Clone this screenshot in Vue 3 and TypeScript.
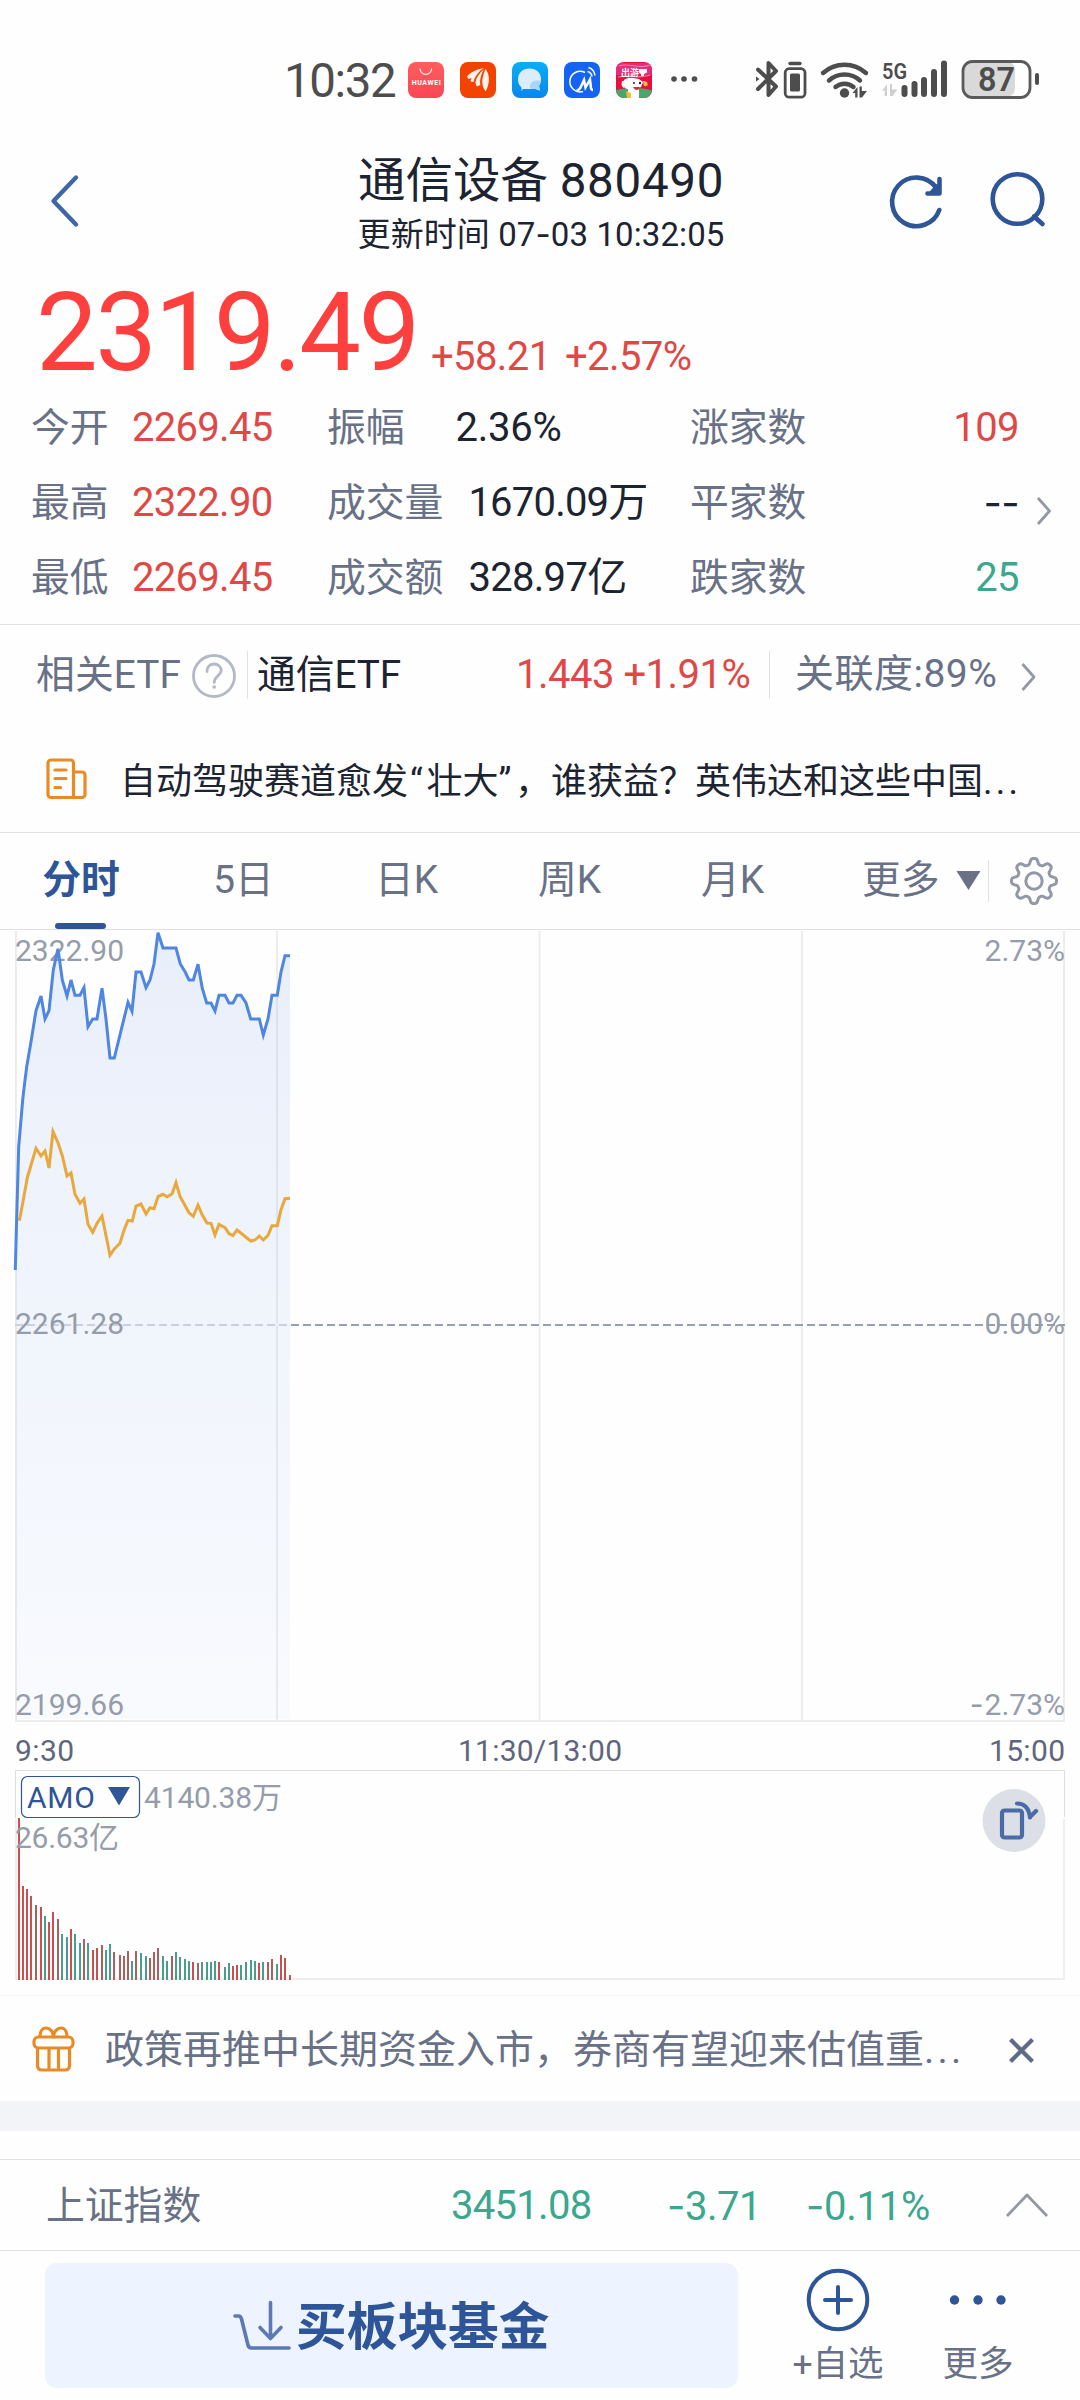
<script setup lang="ts">
interface Stat {
  label: string
  value: string
  tone: string
}
interface StatRow {
  range: Stat
  volume: Stat
  breadth: Stat
}

const rows: StatRow[] = [
  {
    range: { label: '今开', value: '2269.45', tone: 'up' },
    volume: { label: '振幅', value: '2.36%', tone: 'swing' },
    breadth: { label: '涨家数', value: '109', tone: 'up' },
  },
  {
    range: { label: '最高', value: '2322.90', tone: 'up' },
    volume: { label: '成交量', value: '1670.09万', tone: '' },
    breadth: { label: '平家数', value: '--', tone: 'none' },
  },
  {
    range: { label: '最低', value: '2269.45', tone: 'up' },
    volume: { label: '成交额', value: '328.97亿', tone: 'amount' },
    breadth: { label: '跌家数', value: '25', tone: 'down' },
  },
]

type Point = [number, number]

// Series are stored in thirds of a pixel, relative to the plot's origin.
const price: Point[] = [
  [46, 1050], [50, 890], [56, 680], [62, 610], [68, 540], [72, 505], [80, 440], [93, 365], [108, 272], [123, 228], [135, 297], [147, 272],
  [160, 150], [174, 86], [187, 180], [201, 228], [213, 180], [225, 226], [240, 226], [252, 203], [264, 320],
  [278, 297], [291, 297], [306, 205], [318, 297], [330, 414], [343, 414], [384, 247], [396, 274], [408, 156],
  [423, 156], [438, 203], [450, 180], [462, 132], [474, 38], [489, 84], [528, 84], [541, 132], [555, 155], [567, 180],
  [580, 180], [594, 133], [607, 205], [620, 249], [633, 249], [645, 273], [657, 226], [675, 226], [687, 249],
  [699, 249], [711, 226], [723, 226], [738, 249], [752, 297], [778, 297], [790, 345], [804, 297], [816, 226],
  [832, 226], [843, 156], [855, 107], [870, 107],
]
const average: Point[] = [
  [58, 362], [68, 310], [82, 233], [108, 145], [123, 168], [135, 153], [147, 204], [159, 95], [174, 128],
  [187, 167], [201, 228], [213, 219], [225, 283], [240, 310], [252, 297], [264, 373], [278, 397], [291, 370],
  [306, 348], [330, 466], [343, 447], [360, 430], [372, 391], [384, 361], [397, 363], [408, 318], [423, 312],
  [438, 342], [450, 323], [462, 326], [474, 290], [489, 283], [501, 290], [516, 282], [528, 248], [540, 289],
  [567, 338], [580, 349], [594, 315], [607, 345], [621, 369], [633, 370], [645, 405], [657, 373], [675, 383],
  [687, 401], [699, 407], [711, 390], [752, 423], [765, 420], [778, 408], [790, 420], [804, 406], [816, 377],
  [832, 377], [843, 329], [855, 296], [870, 295],
]
const toPoints = (list: Point[], top: number): string =>
  list.map(([x, y]) => `${(x / 3).toFixed(1)},${(top + y / 3).toFixed(1)}`).join(' ')

const priceLine = toPoints(price, -10)
const averageLine = toPoints(average, 170)
const area = `15,789 ${priceLine} 290,789`

// [centre, top, colour]: r = rise, m = muted rise, g = fall
const volume: [number, number, string][] = [
  [57, -6, 'r'], [69, 198, 'r'], [81, 207, 'r'], [93, 228, 'r'], [108, 255, 'm'], [123, 261, 'r'], [135, 288, 'g'],
  [147, 306, 'r'], [159, 276, 'r'], [174, 297, 'm'], [186, 342, 'g'], [201, 351, 'g'], [213, 327, 'r'],
  [225, 342, 'g'], [240, 369, 'g'], [252, 357, 'm'], [264, 369, 'g'], [279, 390, 'r'], [291, 384, 'r'],
  [306, 375, 'm'], [318, 390, 'g'], [330, 372, 'g'], [342, 396, 'm'], [360, 405, 'm'], [372, 408, 'm'],
  [384, 393, 'm'], [396, 423, 'g'], [408, 393, 'm'], [423, 399, 'g'], [438, 408, 'g'], [450, 414, 'm'],
  [462, 396, 'm'], [474, 384, 'm'], [489, 408, 'g'], [501, 423, 'g'], [516, 408, 'm'], [528, 396, 'g'],
  [540, 411, 'g'], [555, 417, 'g'], [567, 423, 'g'], [579, 426, 'r'], [594, 429, 'm'], [606, 426, 'g'],
  [621, 426, 'g'], [633, 426, 'g'], [645, 423, 'g'], [657, 426, 'r'], [675, 441, 'g'], [687, 429, 'g'],
  [699, 438, 'r'], [711, 435, 'r'], [723, 435, 'g'], [738, 426, 'g'], [753, 420, 'g'], [765, 423, 'g'],
  [777, 429, 'r'], [789, 426, 'g'], [804, 426, 'm'], [816, 417, 'm'], [831, 432, 'g'], [843, 405, 'r'],
  [855, 414, 'r'], [870, 465, 'm'],
]
const fills: Record<string, string> = { r: '#cb4f4f', m: '#a9605f', g: '#479e8c' }

const gearPath = (() => {
  const pts: string[] = []
  for (let i = 0; i < 96; i++) {
    const a = (i / 96) * Math.PI * 2
    const r = 19.7 + 3 * Math.tanh(Math.cos(a * 8) * 1.8)
    pts.push(`${(24 + r * Math.sin(a)).toFixed(2)} ${(24 - r * Math.cos(a)).toFixed(2)}`)
  }
  return `M${pts.join('L')}Z`
})()
</script>

<template>
  <div class="screen">
    <div class="status">
      <span class="clock">10:32</span>
      <div class="apps">
        <svg width="36" height="36" viewBox="0 0 36 36">
          <defs>
            <linearGradient id="hw" x1="0" y1="0" x2="0" y2="1"><stop offset="0" stop-color="#ff5e5c" /><stop offset="1" stop-color="#fb4655" /></linearGradient>
          </defs>
          <rect width="36" height="36" rx="8" fill="url(#hw)" />
          <path d="M12 6.500a5.800 5.800 0 0 0 11.600 0" fill="none" stroke="#fff" stroke-width="1.100" />
          <text x="3.700" y="23" font-size="7" font-weight="700" fill="#fff" textLength="29">HUAWEI</text>
        </svg>
        <svg width="36" height="36" viewBox="0 0 36 36">
          <rect width="36" height="36" rx="8" fill="#f24301" />
          <path d="M24 6c-7 1-14 4.500-17 8.500l1.500 2.500 3-1-1 3.500 3 .5C15 14 19 9 24 6z" fill="#fff0e8" />
          <path d="M24.300 7c-5 4-8 8.500-9 13.500l1.500 4 3.500-1.500C19.500 17 21.500 11 24.300 7z" fill="#fff0e8" />
          <path d="M25.500 7c-3 7-4 12-2.500 18l2.500 4.500C29.500 23 30.500 13 25.500 7z" fill="#fff0e8" />
        </svg>
        <svg width="36" height="36" viewBox="0 0 36 36">
          <defs>
            <linearGradient id="msg" x1="0" y1="0" x2="0" y2="1"><stop offset="0" stop-color="#0aaef6" /><stop offset="1" stop-color="#0786ef" /></linearGradient>
          </defs>
          <rect width="36" height="36" rx="8" fill="url(#msg)" />
          <path d="M17.500 6.500c7 0 11.500 4.500 11.500 10.500 0 3-1 5.500-2 7l1 4.500-4.500-1.500H11l-1.500 2v-3.500C7 23.500 6 20.500 6 17.500 6 11 10.500 6.500 17.500 6.500z" fill="#dcedfa" />
          <path d="M28.500 19c-4.500-1.500-10.500.5-10.500 5.500 0 1.500.5 2 1.500 2.500h4l4.500 1.500-1-4.500c1-1.500 1.500-3 1.500-5z" fill="#a9d5f7" />
        </svg>
        <svg width="36" height="36" viewBox="0 0 36 36">
          <rect width="36" height="36" rx="8" fill="#1463f3" />
          <g fill="none" stroke="#fff">
            <path d="M21 10.500A10.300 10.300 0 1 0 19 29.500" stroke-width="1.500" />
            <path d="M12.500 28.500c2.500 0 3.500-1.500 5-5l2.500-5.500 1.500 7.500 4.500-8 1 8.500c.3 1.500 1 2 2 2" stroke-width="2.500" />
            <path d="M23.500 9.500a6 6 0 0 1 4.500 5M24.500 5.500a9.500 9.500 0 0 1 6.500 8" stroke-width="1.500" />
          </g>
        </svg>
        <svg width="36" height="36" viewBox="0 0 36 36">
          <defs><clipPath id="trip"><rect width="36" height="36" rx="8" /></clipPath></defs>
          <g clip-path="url(#trip)">
            <rect width="36" height="36" fill="#e3123d" />
            <path d="M-2 1h40v12H-2z" fill="#e52c78" />
            <path d="M3 4c8-4 21 4 31-1M2 15c9-2 23 2 32-2" fill="none" stroke="#ff7ab0" stroke-width="1.200" />
            <path d="M-2 29c10-4 28-4 40 0v9H-2z" fill="#4aa66c" />
            <text x="5" y="14" font-size="9" font-weight="700" fill="#fff">出游</text>
            <path d="M23 7h8v3.500l-3 1.500v2h-3v-2l-2-1.500z" fill="#fff" />
            <path d="M8 18c3-3 10-2 15-1l4 3-2 5-2 1v10H12v-9c-4 0-6-4-4-9z" fill="#fff" />
            <path d="M6 19c-1 4 0 6 2 7l1-7zM27 19l4 1-2 4z" fill="#f3f3f3" />
            <path d="M17 25h7c-1 4-5 4-7 0z" fill="#dc2b35" />
            <circle cx="18" cy="21" r="1" fill="#222" /><circle cx="24" cy="21" r="1.200" fill="#222" />
            <path d="M10 29l5 2v5h-4z" fill="#f1bb3d" /><circle cx="29.500" cy="22" r="2.200" fill="#f5b93e" />
          </g>
        </svg>
      </div>
      <svg class="more-dots" width="28" height="8" viewBox="0 0 28 8" fill="#4d4d4d">
        <circle cx="4" cy="4" r="2.800" /><circle cx="14" cy="4" r="2.800" /><circle cx="24.500" cy="4" r="2.800" />
      </svg>
      <svg class="signals" width="290" height="44" viewBox="0 0 290 44" fill="none" stroke="#4d4d4d">
        <g stroke-width="4" stroke-linecap="round" stroke-linejoin="round">
          <path d="M4 11.500l18 17-7.500 8.500V5l7.500 8L4 31" />
        </g>
        <path d="M2 18.500l3.500 2.500L2 23.500z" fill="#4d4d4d" stroke="none" />
        <path d="M36 5.500h10" stroke-width="3.400" stroke-linecap="round" />
        <rect x="31.200" y="10.700" width="19.800" height="28.500" rx="4" stroke-width="2.800" />
        <rect x="36" y="15.500" width="10" height="18" rx="1.500" fill="#4d4d4d" stroke="none" />
        <g stroke-width="4.400" stroke-linecap="round">
          <path d="M69 15a32 32 0 0 1 43 0M75 22.500a23 23 0 0 1 31 0M81.500 29a14 14 0 0 1 18 0" />
        </g>
        <circle cx="90.500" cy="35" r="4.700" fill="#4d4d4d" stroke="none" />
        <path d="M98.500 35l5-6v10.500h-2.300V35zM105.500 28.500h2.300V33h5.200l-5 6.500h-2.500z" fill="#4d4d4d" stroke="none" />
        <path d="M128 32.500l5-6v11.500h-2.300v-5.500zM136 26h2v5.500h5.500l-5 6.500H136z" fill="#cfcfcf" stroke="none" />
        <text x="128" y="21" font-size="21.500" font-weight="600" fill="#4d4d4d" stroke="none" textLength="25" lengthAdjust="spacingAndGlyphs">5G</text>
        <g stroke-width="6" stroke-linecap="round">
          <path d="M150.500 30v6M160.500 26v10M170 22v14M180 14v22M190 5.500V36" />
        </g>
        <rect x="209" y="3.500" width="52" height="35" rx="8" fill="#d9d9d9" stroke="none" />
        <rect x="209" y="3.500" width="67" height="36" rx="9.500" stroke-width="2.800" stroke="#5a5a5a" />
        <rect x="281" y="15" width="4" height="12" rx="2" fill="#4d4d4d" stroke="none" />
        <text x="224" y="32.500" font-size="34" font-weight="600" fill="#4d4d4d" stroke="none" textLength="37" lengthAdjust="spacingAndGlyphs">87</text>
      </svg>
    </div>

    <header class="header">
      <svg class="back" width="32" height="54" viewBox="0 0 32 54"><path d="M26 3.500L3.500 27 26 50.500" /></svg>
      <div class="titles">
        <h1>通信设备 <span>880490</span></h1>
        <p>更新时间 07<i>-</i>03 10:32:05</p>
      </div>
      <svg class="tool" width="60" height="60" viewBox="0 0 60 60">
        <path d="M50 15.500A24.300 24.300 0 1 0 53.300 38" /><path d="M53.500 7v14.500H41.500" /><path d="M51 13l1 7-7-.5z" class="solid" />
      </svg>
      <svg class="tool search" width="60" height="60" viewBox="0 0 60 60">
        <circle cx="29.500" cy="29" r="24.800" /><path d="M46 46.500l8.500 7.500" />
      </svg>
    </header>

    <section class="quote">
      <strong>2319.49</strong><span class="diff">+58.21</span><span class="rate">+2.57%</span>
    </section>

    <section class="stats">
      <div class="table">
        <div v-for="row in rows" :key="row.range.label" class="row">
          <span class="label">{{ row.range.label }}</span>
          <span class="value first" :class="row.range.tone">{{ row.range.value }}</span>
          <span class="mid">
            <span class="label">{{ row.volume.label }}</span>
            <span class="value" :class="row.volume.tone">{{ row.volume.value }}</span>
          </span>
          <span class="label">{{ row.breadth.label }}</span>
          <span class="value last" :class="row.breadth.tone">{{ row.breadth.value }}</span>
        </div>
      </div>
      <svg class="arrow" width="18" height="30" viewBox="0 0 18 30"><path d="M3 2l11.500 13L3 28" /></svg>
    </section>

    <section class="etf">
      <span class="label">相关ETF</span>
      <svg class="help" width="46" height="46" viewBox="0 0 46 46">
        <circle cx="23" cy="23" r="20.500" /><path d="M16 18.500c0-4.500 3-7.500 7.200-7.500s7 3 7 6.500c0 5-7 5.500-7 12" /><circle class="pt" cx="23.200" cy="34" r="1.800" />
      </svg>
      <i class="bar"></i>
      <span class="name">通信ETF</span>
      <span class="etf-price">1.443 +1.91%</span>
      <i class="bar second"></i>
      <span class="label relation">关联度:89%</span>
      <svg class="arrow" width="18" height="30" viewBox="0 0 18 30"><path d="M3.500 2L15 15 3.500 28" /></svg>
    </section>

    <section class="news">
      <svg width="42" height="44" viewBox="0 0 42 44" fill="none" stroke="#e88a26" stroke-width="3.200" stroke-linejoin="round" stroke-linecap="round">
        <path d="M28.500 40.500H6a3 3 0 0 1-3-3V6a3 3 0 0 1 3-3h19.500a3 3 0 0 1 3 3zM28.500 15h8.500a3 3 0 0 1 3 3v19.500a3 3 0 0 1-3 3h-8.500" />
        <path d="M10 13h11M10 21.500h11M10 30.500h5.500" />
      </svg>
      <span>自动驾驶赛道愈发<b class="open">“</b>壮大<b>”</b>，谁获益？英伟达和这些中国<b class="dots3">...</b></span>
    </section>

    <nav class="tabs">
      <span class="tab active">分时</span>
      <span class="tab">5日</span>
      <span class="tab">日K</span>
      <span class="tab">周K</span>
      <span class="tab">月K</span>
      <span class="tab more">更多<svg width="26" height="20" viewBox="0 0 26 20"><path d="M0.500 0h24L12.500 19z" fill="#687186" /></svg></span>
      <i class="bar"></i>
      <svg class="gear" width="48" height="48" viewBox="0 0 48 48"><path :d="gearPath" /><circle cx="24" cy="24" r="8.200" /></svg>
    </nav>

    <svg class="chart" width="1080" height="1065" viewBox="0 0 1080 1065">
      <defs>
        <linearGradient id="shade" x1="0" y1="0" x2="0" y2="1">
          <stop offset="0" stop-color="#4f82df" stop-opacity=".12" /><stop offset="1" stop-color="#5a8cf0" stop-opacity=".035" />
        </linearGradient>
      </defs>
      <path d="M16 1v790M277 1v790M539.500 1v790M802 1v790M1064 1v790M15 791h1050" stroke="#ededed" stroke-width="2" />
      <path d="M15 395h1050" stroke="#94a0b0" stroke-width="1.800" stroke-dasharray="8 4" />
      <polygon :points="area" fill="url(#shade)" />
      <path d="M15 395h275" stroke="#eff3fc" stroke-width="3" stroke-opacity=".6" />
      <g class="axis">
        <text x="15" y="31" textLength="109">2322.90</text>
        <text x="15" y="404" textLength="109">2261.28</text>
        <text x="15" y="785" textLength="109">2199.66</text>
        <text x="1065" y="31" text-anchor="end">2.73%</text>
        <text x="1065" y="404" text-anchor="end">0.00%</text>
        <text x="1065" y="785" text-anchor="end"><tspan class="dash">-</tspan><tspan dx="1">2.73%</tspan></text>
      </g>
      <polyline :points="averageLine" fill="none" stroke="#e8a83c" stroke-width="3" />
      <polyline :points="priceLine" fill="none" stroke="#4f86e0" stroke-width="3" />
      <g class="axis time">
        <text x="15" y="831" textLength="59">9:30</text>
        <text x="540" y="831" text-anchor="middle" textLength="164">11:30/13:00</text>
        <text x="1065" y="831" text-anchor="end" textLength="76">15:00</text>
      </g>
      <path d="M15.500 888V840.500h1049V887" fill="none" stroke="#dedede" />
      <path d="M16 889v160M15 1049h1049v-160" fill="none" stroke="#eeeeef" stroke-width="2" />
      <rect v-for="bar in volume" :key="bar[0]" :x="bar[0] / 3 - 1" :y="890 + bar[1] / 3" width="2" :height="(480 - bar[1]) / 3" :fill="fills[bar[2]]" />
      <rect x="21.500" y="846.500" width="118" height="41" rx="6" fill="#fefefe" stroke="#2f5599" stroke-width="1.200" />
      <text x="27" y="878" font-size="30" fill="#2f5599" textLength="68">AMO</text>
      <path d="M108 857h22l-11 18.500z" fill="#2f5599" />
      <g class="axis">
        <text x="144" y="878" textLength="138">4140.38万</text>
        <text x="15" y="918" textLength="104">26.63亿</text>
      </g>
      <circle cx="1014" cy="890.500" r="31.500" fill="#dddfe7" />
      <g fill="none" stroke="#4a6ba5" stroke-width="4.200" stroke-linecap="round" stroke-linejoin="round">
        <rect x="1002" y="880.500" width="20" height="27" rx="2.500" />
        <path d="M1017 873.500c8 0 12 5 13 14M1030 887l6-6" />
      </g>
    </svg>

    <section class="promo">
      <svg width="44" height="46" viewBox="0 0 44 46" fill="none" stroke="#e88a26" stroke-width="3.200" stroke-linejoin="round">
        <rect x="2" y="11" width="39" height="11" rx="4.500" />
        <path d="M5.500 22v18a4 4 0 0 0 4 4h24a4 4 0 0 0 4-4V22M17 22.500V44M26.500 22.500V44M8 11C8 6 10 2 14 2s7.500 4 7.500 9c0-5 3.500-9 7.500-9s6 4 6 9" />
      </svg>
      <span>政策再推中长期资金入市，券商有望迎来估值重<b class="dots3">...</b></span>
      <svg class="close" width="28" height="28" viewBox="0 0 28 28"><path d="M2.500 2.500l22 22M24.500 2.500l-22 22" /></svg>
    </section>
    <div class="band"></div>

    <section class="index">
      <span class="label">上证指数</span>
      <span class="down i1">3451.08</span>
      <span class="down i2"><i>-</i>3.71</span>
      <span class="down i3"><i>-</i>0.11%</span>
      <svg class="arrow" width="44" height="26" viewBox="0 0 44 26"><path d="M2 24L22 3l20 21" /></svg>
    </section>

    <footer class="footer">
      <button>
        <svg width="58" height="52" viewBox="0 0 58 52" fill="none" stroke="#5c79b3" stroke-width="3.600" stroke-linecap="round" stroke-linejoin="round">
          <path d="M2 16h3.500c1.500 0 2.500 1 3 3L15 45c.5 2 1.500 3 3.500 3H56" /><path d="M37.500 2.500v35M27 27.500l10.500 11 10.500-11" />
        </svg>
        <span>买板块基金</span>
      </button>
      <div class="action add">
        <svg width="66" height="66" viewBox="0 0 66 66"><circle cx="33" cy="33" r="29.300" /><path d="M33 20v26M20 33h26" /></svg>
        <span>+自选</span>
      </div>
      <div class="action">
        <svg width="66" height="66" viewBox="0 0 66 66"><g class="dots"><circle cx="9.500" cy="33" r="4.700" /><circle cx="33" cy="33" r="4.700" /><circle cx="56" cy="33" r="4.700" /></g></svg>
        <span>更多</span>
      </div>
    </footer>
  </div>
</template>

<style>
body { background: #fefefe; }
</style>

<style scoped>
.screen {
  width: 1080px;
  height: 2400px;
  overflow: hidden;
  display: flex;
  flex-direction: column;
  background: #fefefe;
  color: #1d2431;
  font: 39px/1.2 Roboto, "Noto Sans CJK SC", sans-serif;
  white-space: nowrap;
}
.screen > * { box-sizing: border-box; flex-shrink: 0; }
svg { display: block; flex-shrink: 0; }
b { font-weight: 400; }
.status { height: 130px; padding: 56px 0 0 284px; display: flex; align-items: flex-start; }
.clock { width: 124px; font-size: 47.500px; line-height: 51px; letter-spacing: -1.400px; color: #4d4d4d; }
.apps { display: flex; gap: 16px; padding-top: 6px; }
.more-dots { margin: 19px 0 0 18px; }
.signals { margin: 2px 0 0 56px; }

.header { height: 140px; display: flex; }
.back { margin: 44px 0 0 50px; fill: none; stroke: #3f66a6; stroke-width: 4.400; stroke-linejoin: round; stroke-linecap: round; }
.titles { width: 460px; margin-left: 229px; text-align: center; }
h1 { margin: 21px 0 0; font-size: 47.500px; font-weight: 400; line-height: 60px; }
h1 span { letter-spacing: .7px; }
.titles p { margin: 0; font-size: 33px; line-height: 47px; letter-spacing: .1px; }
i, .dash, .none { font-style: normal; font-family: Inter, sans-serif; }
.tool { margin: 42px 0 0 115px; fill: none; stroke: #2f5599; stroke-width: 4.600; stroke-linecap: round; stroke-linejoin: round; }
.tool .solid { fill: #2f5599; stroke-width: 2; }
.search { margin: 40px 0 0 42px; }

.quote { height: 120px; padding: 3px 0 0 36px; display: flex; align-items: baseline; line-height: 119px; color: #e04845; }
.quote strong { width: 395px; font-weight: 400; font-size: 110px; letter-spacing: -2.600px; color: #fd3f3d; }
.quote span { font-size: 40px; letter-spacing: -.6px; }
.diff { width: 134px; }

.stats { height: 235px; display: flex; border-bottom: 1px solid #e0e0e0; }
.table { width: 1019px; }
.row { height: 75px; display: flex; align-items: center; padding-left: 31px; line-height: 75px; }
.label { color: #687186; font-size: 38.800px; }
.row > .label { width: 101px; }
.row > .label:nth-of-type(4) { width: 130px; }
.value { font-size: 40px; letter-spacing: -.8px; }
.row .first { width: 195px; letter-spacing: -.7px; }
.mid { width: 363px; display: flex; }
.mid .value { margin-left: 25px; }
.mid .swing { margin-left: 51px; letter-spacing: -.3px; }
.row .last { flex: 1; text-align: right; letter-spacing: -.6px; }
.up { color: #e04845; }
.down { color: #3aa78e; }
.stats .mid .amount { margin-left: 25px; letter-spacing: -.7px; }
.arrow { fill: none; stroke: #9298a6; stroke-width: 2.800; stroke-linejoin: round; }
.stats .arrow { margin: 106px 0 0 16px; }

.etf { height: 99px; display: flex; align-items: center; padding-left: 36px; line-height: 97px; }
.etf > .label:first-child { width: 155px; letter-spacing: .1px; }
.help { margin-top: 3px; fill: none; stroke: #b4b9c5; stroke-width: 2.800; stroke-linecap: round; }
.help .pt { fill: #b4b9c5; stroke: none; }
.bar { width: 1px; height: 48px; background: #e2e2e4; }
.etf .bar { margin-left: 10px; }
.name { width: 259px; margin-left: 9px; font-size: 38.800px; letter-spacing: -.1px; }
.etf-price { width: 233px; font-size: 40px; letter-spacing: -.5px; color: #e04845; }
.etf .second { margin-left: 20px; }
.etf .relation { width: 224px; margin-left: 25px; font-size: 39px; letter-spacing: .5px; }
.etf .arrow { margin-top: 4px; }

.news { height: 109px; display: flex; align-items: center; padding: 5px 0 0 45px; border-bottom: 1px solid #e0e0e0; font-size: 36px; }
.news span { margin: 3px 0 0 33px; line-height: 60px; }
.news b { letter-spacing: 3.700px; }
.news .open { margin-left: 2px; }
.news b.dots3, b.dots3 { letter-spacing: 3.200px; }
.news svg { margin-top: -4px; }

.tabs { height: 97px; display: flex; border-bottom: 1px solid #e0e0e0; color: #687186; font-size: 38.800px; line-height: 93px; }
.tab { width: 163px; text-align: center; }
.tab.active { position: relative; width: 162px; color: #2f5599; font-weight: 700; }
.tab.active::after { content: ""; position: absolute; left: 55px; bottom: 0; width: 51px; height: 6px; border-radius: 3px; background: #2f5599; }
.tab.more { display: flex; width: auto; margin-left: 48px; }
.more svg { margin: 38px 0 0 16px; }
.tabs .bar { margin: 27px 0 0 6px; height: 42px; }
.gear { margin: 24px 0 0 21px; fill: none; stroke: #9298a6; stroke-width: 3; stroke-linejoin: round; }

.axis { font-size: 30px; fill: #959caa; }
.time { fill: #5f667c; }

.promo { height: 106px; display: flex; align-items: center; padding-left: 32px; border-top: 1px solid #f3f3f4; color: #687186; font-size: 39px; }
.promo span { width: 903px; margin: 3px 0 0 29px; line-height: 100px; }
.close { margin-top: 5px; fill: none; stroke: #5d6b87; stroke-width: 4.200; }
.band { height: 30px; background: #f3f4f7; }

.index { height: 92px; margin-top: 28px; display: flex; align-items: center; padding-left: 46px; border-top: 1px solid #dfe0e3; border-bottom: 1px solid #dfe0e3; font-size: 40px; letter-spacing: -.5px; line-height: 50px; }
.index span { margin-top: 2px; }
.index .label { width: 405px; letter-spacing: 0; }
.i1 { width: 216px; letter-spacing: -.7px; }
.i2 { width: 139px; }
.i3 { width: 199px; letter-spacing: -.3px; }

.footer { flex: 1; display: flex; padding: 12px 0 0 45px; }
.footer button { width: 693px; height: 125px; padding: 0 0 0 188px; border: 0; border-radius: 12px; background: #edf4ff; display: flex; align-items: center; color: #2f5599; font: 700 50.700px/125px Roboto, "Noto Sans CJK SC", sans-serif; }
.footer button span { margin: 3px 0 0 5px; }
.action { width: 140px; display: flex; flex-direction: column; align-items: center; color: #687186; font-size: 35.500px; line-height: 62px; }
.action.add { margin-left: 30px; }
.action svg { margin-top: 4px; fill: none; stroke: #2f5599; stroke-width: 4; stroke-linecap: round; }
.dots { fill: #2f5599; stroke: none; }
</style>
